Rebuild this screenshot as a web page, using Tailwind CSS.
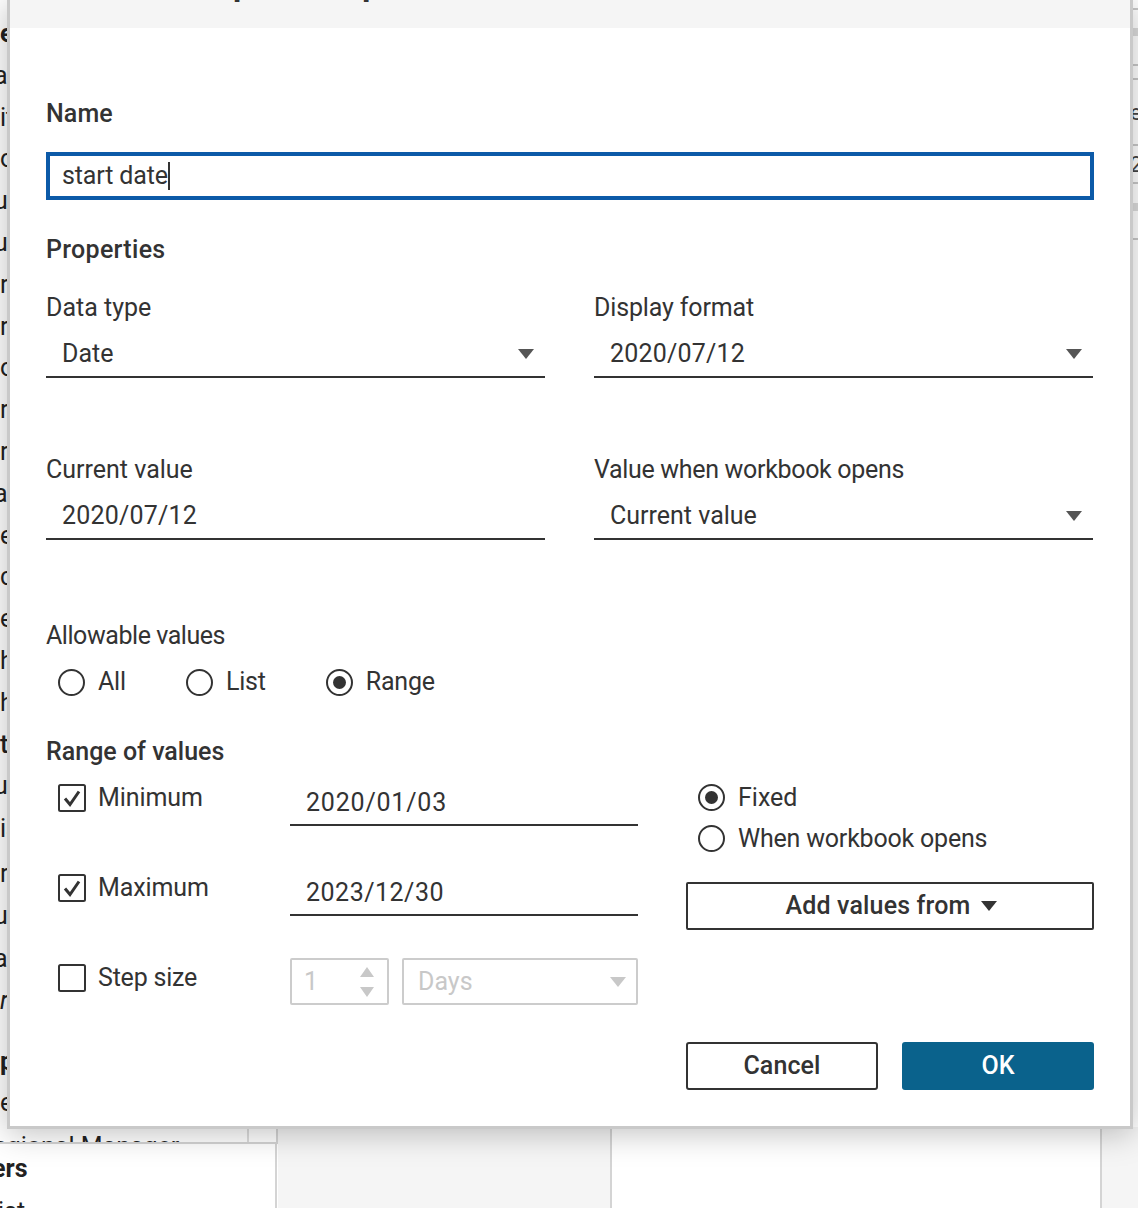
<!DOCTYPE html>
<html lang="en">
<head>
    <meta charset="UTF-8">
    <meta name="viewport" content="width=device-width, initial-scale=1.0">
    <title>Edit Parameter</title>
    <script src="https://cdn.jsdelivr.net/npm/@tailwindcss/browser@4"></script>
</head>
<body class="bg-white font-['Roboto',sans-serif] text-[25px] text-[#333333]">
<div class="relative w-[1138px] h-[1208px] overflow-hidden">

    <!-- Page behind the dialog -->
    <div class="absolute inset-0 flex flex-col">
        <div class="h-[1144px] shrink-0 border-b-2 border-r-2 border-[#d4d4d4] w-[278px] overflow-hidden">
            <div class="h-[1127px] flex flex-col pt-[13px] text-[#222222] leading-[42px]">
                <div class="h-[41.8px] shrink-0 font-bold">e</div>
                <div class="h-[41.8px] shrink-0 -ml-[6px]">a</div>
                <div class="h-[41.8px] shrink-0">it</div>
                <div class="h-[41.8px] shrink-0">o</div>
                <div class="h-[41.8px] shrink-0 -ml-[6px]">u</div>
                <div class="h-[41.8px] shrink-0 -ml-[6px]">u</div>
                <div class="h-[41.8px] shrink-0">r</div>
                <div class="h-[41.8px] shrink-0">r</div>
                <div class="h-[41.8px] shrink-0">o</div>
                <div class="h-[41.8px] shrink-0">r</div>
                <div class="h-[41.8px] shrink-0">r</div>
                <div class="h-[41.8px] shrink-0 -ml-[6px]">al</div>
                <div class="h-[41.8px] shrink-0">e</div>
                <div class="h-[41.8px] shrink-0">c</div>
                <div class="h-[41.8px] shrink-0">e</div>
                <div class="h-[41.8px] shrink-0">h</div>
                <div class="h-[41.8px] shrink-0">h</div>
                <div class="h-[41.8px] shrink-0 font-medium">ta</div>
                <div class="h-[42.8px] shrink-0 -ml-[6px]">u</div>
                <div class="h-[45px] shrink-0">is</div>
                <div class="h-[42px] shrink-0">r</div>
                <div class="h-[43px] shrink-0 -ml-[6px]">u</div>
                <div class="h-[42px] shrink-0 -ml-[6px]">a</div>
                <div class="h-[61px] shrink-0 italic">r</div>
                <div class="h-[41px] shrink-0 font-bold">p</div>
                <div class="h-[20px] shrink-0">e</div>
            </div>
            <div class="h-[15px] overflow-hidden text-[#222222] leading-[40px] whitespace-nowrap border-r-2 border-[#dddddd] w-[249px]"><span class="-ml-[22px] inline-block">Regional Manager</span></div>
        </div>
        <div class="flex-1 min-h-0 overflow-hidden flex">
            <div class="w-[277px] border-r-2 border-[#d4d4d4] overflow-hidden">
                <div class="font-bold leading-[50px] text-[#222222] -ml-[8px]">ers</div>
                <div class="text-[#222222] leading-[36px] -ml-[2px]">ist</div>
            </div>
        </div>
    </div>
    <div class="absolute left-[278px] top-[1127px] w-[334px] h-[81px] bg-[#f5f5f5] border-r-2 border-[#d4d4d4]"></div>
    <div class="absolute left-[1100px] top-[1127px] w-[38px] h-[81px] bg-[#f5f5f5] border-l-2 border-[#d4d4d4]"></div>

    <!-- Strip on the right of the dialog -->
    <div class="absolute right-0 top-0 w-[8px] h-[240px] flex flex-col overflow-hidden">
        <div class="h-[10px] shrink-0 border-b-2 border-[#c8c8c8]"></div>
        <div class="h-[18px] shrink-0"></div>
        <div class="h-[8px] shrink-0 bg-[#dcdcdc]"></div>
        <div class="h-[30px] shrink-0 border-b-2 border-[#c8c8c8]"></div>
        <div class="h-[14px] shrink-0 border-b-2 border-[#c8c8c8]"></div>
        <div class="h-[66px] shrink-0 border-b-2 border-[#c8c8c8] text-[#444444] leading-[66px] text-[22px]">e</div>
        <div class="h-[38px] shrink-0 border-b-2 border-[#c8c8c8] text-[#444444] leading-[38px] text-[22px]">2</div>
        <div class="h-[19px] shrink-0"></div>
        <div class="h-[8px] shrink-0 bg-[#dcdcdc]"></div>
        <div class="h-[29px] shrink-0 border-b-2 border-[#c8c8c8]"></div>
    </div>

    <!-- Dialog -->
    <div class="absolute left-[7px] top-0 w-[1126px] h-[1129px] bg-white border-x-[3px] border-b-[3px] border-[#c9c9c9] shadow-[0_4px_30px_rgba(0,0,0,0.25)] flex flex-col">
        <div class="h-[28px] bg-[#f5f5f5] overflow-hidden shrink-0">
            <div class="flex gap-[124px] pl-[223px] -mt-[25px] leading-[30px] text-[#333333]">
                <span>[</span><span>]</span>
            </div>
        </div>

        <div class="flex-1 pl-[36px] pr-[36px] flex flex-col">
            <div class="h-[124px] pt-[69px] leading-[34px] font-medium tracking-[0.1px]">Name</div>
            <div class="h-[48px] border-4 border-[#0c5aa8] pl-[12px] flex items-center">
                <span class="tracking-[-0.15px]">start date</span><span class="w-[2px] h-[28px] bg-[#333333]"></span>
            </div>
            <div class="mt-[33px] leading-[34px] font-medium tracking-[0.3px]">Properties</div>

            <div class="mt-[24px] grid grid-cols-[499px_499px] gap-x-[49px]">
                <div class="h-[162px]">
                    <div class="leading-[34px]">Data type</div>
                    <div class="mt-[9px] h-[44px] pb-[2px] border-b-2 border-[#333333] pl-[16px] flex items-center justify-between pr-[11px]">
                        <span>Date</span>
                        <svg width="16" height="10" viewBox="0 0 16 10"><path d="M0 0h16L8 10z" fill="#555555"/></svg>
                    </div>
                </div>
                <div class="h-[162px]">
                    <div class="leading-[34px] tracking-[-0.15px]">Display format</div>
                    <div class="mt-[9px] h-[44px] pb-[2px] border-b-2 border-[#333333] pl-[16px] flex items-center justify-between pr-[11px]">
                        <span class="tracking-[0.2px]">2020/07/12</span>
                        <svg width="16" height="10" viewBox="0 0 16 10"><path d="M0 0h16L8 10z" fill="#555555"/></svg>
                    </div>
                </div>
                <div class="h-[166px]">
                    <div class="leading-[34px]">Current value</div>
                    <div class="mt-[9px] h-[44px] pb-[2px] border-b-2 border-[#333333] pl-[16px] flex items-center">
                        <span class="tracking-[0.2px]">2020/07/12</span>
                    </div>
                </div>
                <div class="h-[166px]">
                    <div class="leading-[34px] tracking-[-0.32px]">Value when workbook opens</div>
                    <div class="mt-[9px] h-[44px] pb-[2px] border-b-2 border-[#333333] pl-[16px] flex items-center justify-between pr-[11px]">
                        <span>Current value</span>
                        <svg width="16" height="10" viewBox="0 0 16 10"><path d="M0 0h16L8 10z" fill="#555555"/></svg>
                    </div>
                </div>
            </div>

            <div class="leading-[34px] tracking-[-0.45px]">Allowable values</div>
            <div class="mt-[12px] h-[34px] pl-[12px] flex items-center">
                <div class="w-[27px] h-[27px] rounded-full border-2 border-[#333333]"></div>
                <span class="ml-[13px] tracking-[-0.2px]">All</span>
                <div class="ml-[60px] w-[27px] h-[27px] rounded-full border-2 border-[#333333]"></div>
                <span class="ml-[13px] tracking-[-0.2px]">List</span>
                <div class="ml-[60px] w-[27px] h-[27px] rounded-full border-2 border-[#333333] flex items-center justify-center"><div class="w-[13px] h-[13px] rounded-full bg-[#333333]"></div></div>
                <span class="ml-[13px] tracking-[-0.2px]">Range</span>
            </div>

            <div class="mt-[36px] leading-[34px] font-medium">Range of values</div>

            <div class="mt-[12px] flex">
                <div class="w-[244px] pl-[12px]">
                    <div class="h-[90px] flex items-start">
                        <svg class="mt-[3px]" width="28" height="28" viewBox="0 0 28 28"><rect x="1" y="1" width="26" height="26" rx="1.5" fill="none" stroke="#333333" stroke-width="2"/><path d="M7 14.5l5 6 9-13" fill="none" stroke="#333333" stroke-width="3"/></svg>
                        <span class="ml-[12px] leading-[34px] tracking-[-0.1px]">Minimum</span>
                    </div>
                    <div class="h-[90px] flex items-start">
                        <svg class="mt-[3px]" width="28" height="28" viewBox="0 0 28 28"><rect x="1" y="1" width="26" height="26" rx="1.5" fill="none" stroke="#333333" stroke-width="2"/><path d="M7 14.5l5 6 9-13" fill="none" stroke="#333333" stroke-width="3"/></svg>
                        <span class="ml-[12px] leading-[34px] tracking-[-0.1px]">Maximum</span>
                    </div>
                    <div class="flex items-start">
                        <svg class="mt-[3px]" width="28" height="28" viewBox="0 0 28 28"><rect x="1" y="1" width="26" height="26" rx="1.5" fill="none" stroke="#333333" stroke-width="2"/></svg>
                        <span class="ml-[12px] leading-[34px] tracking-[-0.2px]">Step size</span>
                    </div>
                </div>

                <div class="w-[348px]">
                    <div class="h-[90px]">
                        <div class="h-[45px] border-b-2 border-[#333333] pl-[16px] flex items-center tracking-[0.8px]">2020/01/03</div>
                    </div>
                    <div class="h-[90px]">
                        <div class="h-[45px] border-b-2 border-[#333333] pl-[16px] flex items-center tracking-[0.5px]">2023/12/30</div>
                    </div>
                    <div class="-mt-[3px] flex gap-[13px] text-[#c8c8c8]">
                        <div class="w-[99px] h-[47px] border-2 border-[#cccccc] rounded-[2px] pl-[12px] pr-[12px] pt-[1px] flex items-center justify-between">
                            <span>1</span>
                            <svg width="16" height="30" viewBox="0 0 16 30"><path d="M1 10L8 0l7 10zM1 20h14l-7 10z" fill="#c8c8c8"/></svg>
                        </div>
                        <div class="w-[236px] h-[47px] border-2 border-[#cccccc] rounded-[2px] pl-[14px] pr-[10px] pt-[1px] flex items-center justify-between">
                            <span>Days</span>
                            <svg width="16" height="10" viewBox="0 0 16 10"><path d="M0 0h16L8 10z" fill="#c8c8c8"/></svg>
                        </div>
                    </div>
                </div>

                <div class="ml-[48px] w-[408px] -mt-[4px]">
                    <div class="pl-[12px] h-[41px] flex items-center">
                        <div class="w-[27px] h-[27px] rounded-full border-2 border-[#333333] flex items-center justify-center"><div class="w-[13px] h-[13px] rounded-full bg-[#333333]"></div></div>
                        <span class="ml-[13px]">Fixed</span>
                    </div>
                    <div class="pl-[12px] h-[41px] flex items-center">
                        <div class="w-[27px] h-[27px] rounded-full border-2 border-[#333333]"></div>
                        <span class="ml-[13px] tracking-[-0.2px]">When workbook opens</span>
                    </div>
                    <div class="mt-[23px] h-[48px] border-2 border-[#333333] rounded-[2px] pl-[3px] flex items-center justify-center gap-[11px] font-medium tracking-[0.15px]">
                        Add values from
                        <svg width="16" height="10" viewBox="0 0 16 10"><path d="M0 0h16L8 10z" fill="#333333"/></svg>
                    </div>
                </div>
            </div>

            <div class="mt-[37px] flex justify-end gap-[24px] font-medium">
                <div class="w-[192px] h-[48px] border-2 border-[#333333] rounded-[3px] flex items-center justify-center tracking-[0.1px]">Cancel</div>
                <div class="w-[192px] h-[48px] bg-[#0a628c] text-white rounded-[3px] flex items-center justify-center">OK</div>
            </div>
        </div>
    </div>
</div>
</body>
</html>
